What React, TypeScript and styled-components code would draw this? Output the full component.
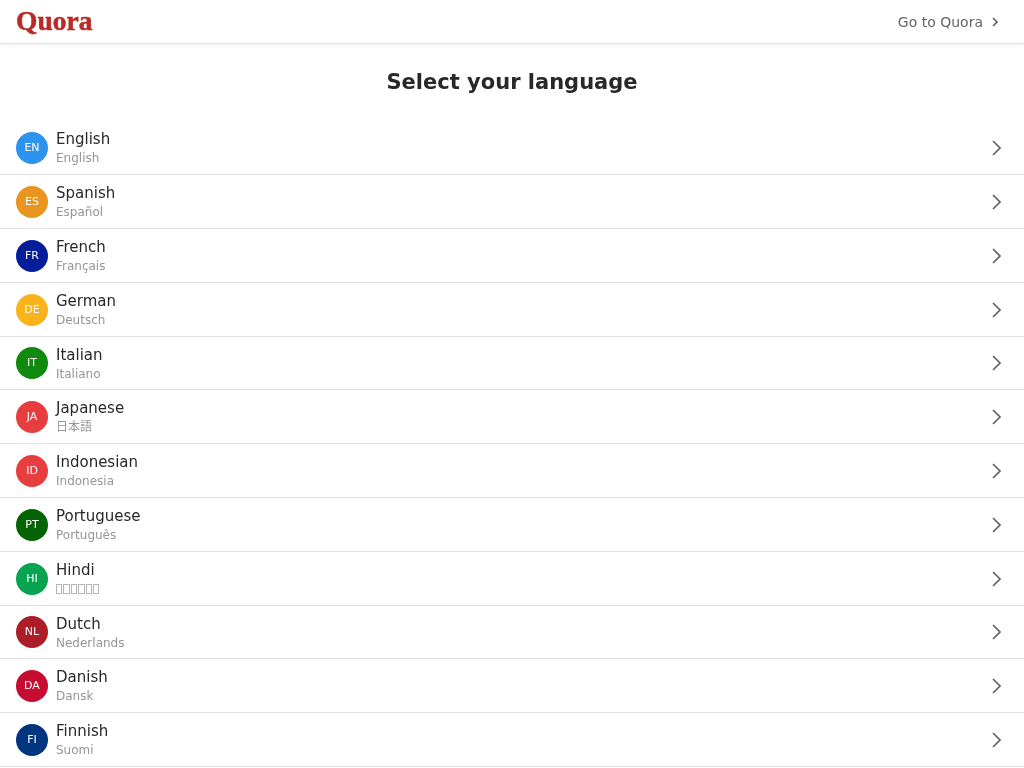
import styled, { createGlobalStyle } from "styled-components";

const languages = [
  { code: "EN", name: "English", native: "English", color: "#2e93ee" },
  { code: "ES", name: "Spanish", native: "Español", color: "#e9951f" },
  { code: "FR", name: "French", native: "Français", color: "#051d9b" },
  { code: "DE", name: "German", native: "Deutsch", color: "#fbb31b" },
  { code: "IT", name: "Italian", native: "Italiano", color: "#0f8a0c" },
  { code: "JA", name: "Japanese", native: "日本語", color: "#e83d3f" },
  { code: "ID", name: "Indonesian", native: "Indonesia", color: "#e83d3f" },
  { code: "PT", name: "Portuguese", native: "Português", color: "#046404" },
  { code: "HI", name: "Hindi", native: "हिन्दी", color: "#07a350", missingFont: true },
  { code: "NL", name: "Dutch", native: "Nederlands", color: "#ae1c28" },
  { code: "DA", name: "Danish", native: "Dansk", color: "#c60c30" },
  { code: "FI", name: "Finnish", native: "Suomi", color: "#003580" },
];

const GlobalStyle = createGlobalStyle`
  html, body {
    margin: 0;
    padding: 0;
    background: #fff;
    font-family: "DejaVu Sans", "Noto Sans CJK JP", sans-serif;
  }
`;

const Page = styled.div`
  width: 100%;
  height: 768px;
  overflow: hidden;
  will-change: transform;
`;

const Header = styled.header`
  display: flex;
  justify-content: space-between;
  align-items: center;
  height: 43px;
  padding: 0 26px 0 16px;
  border-bottom: 1px solid #e2e2e2;
  box-shadow: 0 1px 4px rgba(0, 0, 0, 0.06);
`;

const Logo = styled.div`
  font-family: "Liberation Serif", serif;
  font-weight: 700;
  font-size: 27.5px;
  line-height: 40px;
  padding-bottom: 2px;
  -webkit-text-stroke: 0.5px #b92b27;
  color: #b92b27;
`;

const GoTo = styled.a`
  display: flex;
  align-items: center;
  gap: 9px;
  font-size: 14px;
  color: #636466;
`;

const Title = styled.h1`
  margin: 0;
  padding: 25px 0 25.4px;
  font-size: 21px;
  line-height: 27px;
  font-weight: 700;
  text-align: center;
  color: #282829;
`;

const List = styled.ul`
  list-style: none;
  margin: 0;
  padding: 0;
`;

const Row = styled.li`
  display: flex;
  align-items: center;
  gap: 8px;
  height: 53.8px;
  box-sizing: border-box;
  padding: 1px 23px 0 16px;
  border-bottom: 1px solid #dedfe0;
`;

const Badge = styled.span<{ $color: string }>`
  flex: none;
  display: flex;
  align-items: center;
  justify-content: center;
  width: 32px;
  height: 32px;
  box-sizing: border-box;
  padding-bottom: 1px;
  border-radius: 50%;
  background: ${(p) => p.$color};
  color: #fff;
  font-size: 11px;
`;

const Names = styled.div`
  flex: 1;
  display: flex;
  flex-direction: column;
  gap: 1px;
  margin-bottom: 0.9px;
`;

const Name = styled.span`
  font-size: 15px;
  line-height: 20px;
  color: #282829;
`;

const Native = styled.span`
  font-size: 12px;
  line-height: 16px;
  color: #939598;
`;

// the reference has no Devanagari font, so this label shows as empty boxes
const MissingGlyphs = styled.span`
  display: flex;
  gap: 1px;
  height: 16px;
  padding-top: 3px;
  box-sizing: border-box;
`;

const MissingGlyph = styled.i`
  width: 6.4px;
  height: 10px;
  box-sizing: border-box;
  border: 1px solid #b4b5b7;
`;

const Chevron = ({ width, height }: { width: number; height: number }) => (
  <svg width={width} height={height} viewBox={`0 0 ${width} ${height}`} fill="none" stroke="#636466" strokeWidth={1.7}>
    <path d={`M1 1 L${width - 1} ${height / 2} L1 ${height - 1}`} />
  </svg>
);

export default function App() {
  return (
    <Page>
      <GlobalStyle />
      <Header>
        <Logo>Quora</Logo>
        <GoTo>
          Go to Quora
          <Chevron width={6} height={10} />
        </GoTo>
      </Header>
      <Title>Select your language</Title>
      <List>
        {languages.map((l) => (
          <Row key={l.code}>
            <Badge $color={l.color}>{l.code}</Badge>
            <Names>
              <Name>{l.name}</Name>
              {l.missingFont ? (
                <MissingGlyphs aria-label={l.native}>
                  {[...Array(6).keys()].map((i) => (
                    <MissingGlyph key={i} />
                  ))}
                </MissingGlyphs>
              ) : (
                <Native>{l.native}</Native>
              )}
            </Names>
            <Chevron width={9} height={16} />
          </Row>
        ))}
      </List>
    </Page>
  );
}
